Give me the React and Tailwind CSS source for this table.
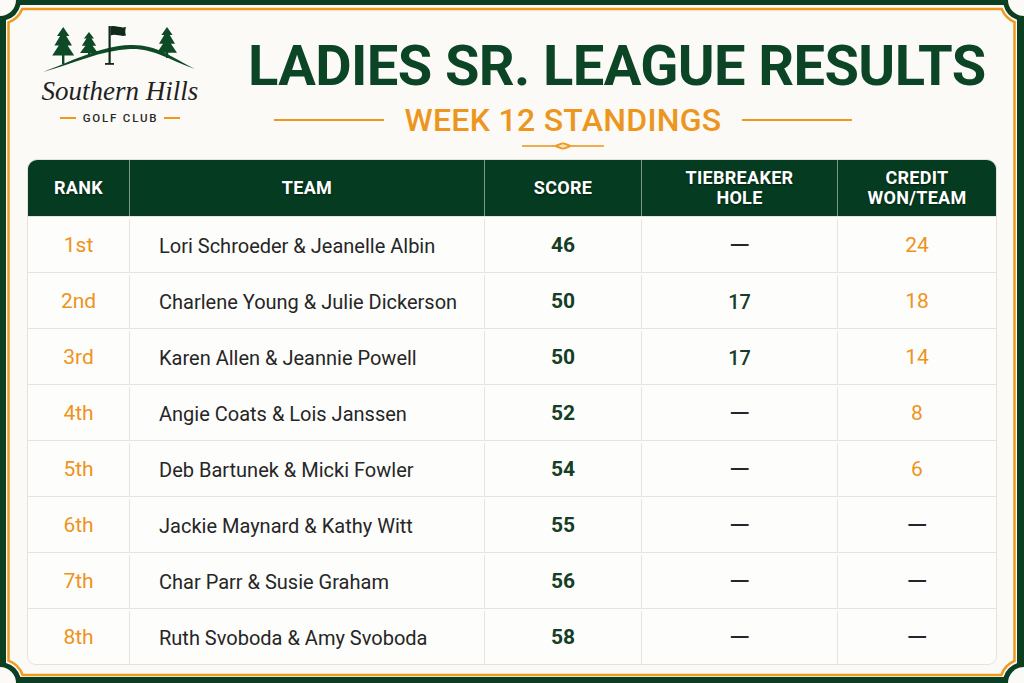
import React from "react";

const rows = [
  ["1st", "Lori Schroeder & Jeanelle Albin", "46", "—", "24"],
  ["2nd", "Charlene Young & Julie Dickerson", "50", "17", "18"],
  ["3rd", "Karen Allen & Jeannie Powell", "50", "17", "14"],
  ["4th", "Angie Coats & Lois Janssen", "52", "—", "8"],
  ["5th", "Deb Bartunek & Micki Fowler", "54", "—", "6"],
  ["6th", "Jackie Maynard & Kathy Witt", "55", "—", "—"],
  ["7th", "Char Parr & Susie Graham", "56", "—", "—"],
  ["8th", "Ruth Svoboda & Amy Svoboda", "58", "—", "—"],
];

function pine(cx, top, w, h) {
  const p = [
    [0, 0],
    [0.28, 0.3],
    [0.14, 0.3],
    [0.4, 0.62],
    [0.2, 0.62],
    [0.5, 0.95],
  ];
  const right = p.map(([x, y]) => `${cx + x * w},${top + y * h}`);
  const left = p
    .slice()
    .reverse()
    .map(([x, y]) => `${cx - x * w},${top + y * h}`);
  return "M" + right.join(" L") + " L" + left.join(" L") + " Z";
}

function Frame() {
  const G = "#0c3f22";
  return (
    <svg
      className="absolute inset-0 pointer-events-none"
      width="1024"
      height="683"
      viewBox="0 0 1024 683"
    >
      <path
        fillRule="evenodd"
        fill={G}
        d="M0 0 H1024 V683 H0 Z M20.4 5 L1003.6 5 A21 21 0 0 0 1017 19.8 L1017 663.2 A21 21 0 0 0 1003.6 677 L20.4 677 A21 21 0 0 0 6 662.9 L6 20.1 A21 21 0 0 0 20.4 5 Z"
      />
      {[
        [0, 0],
        [1024, 0],
        [0, 683],
        [1024, 683],
      ].map(([x, y], i) => (
        <circle key={i} cx={x} cy={y} r="16" fill="#fbfaf6" />
      ))}
      <path
        fill="none"
        stroke="#ee9a22"
        strokeWidth="2.5"
        d="M22.25 9 L1001.75 9 A24 24 0 0 0 1014.5 22.04 L1014.5 660.96 A24 24 0 0 0 1001.37 675 L22.63 675 A24 24 0 0 0 8.5 660.56 L8.5 22.44 A24 24 0 0 0 22.25 9 Z"
      />
    </svg>
  );
}

function LogoArt() {
  const G = "#0f4a26";
  return (
    <svg width="160" height="50" viewBox="0 0 160 50">
      <path
        fill={G}
        d="M3 50 C30 40 60 24 90 23 C115 22 130 34 155 47 C128 37 112 26 90 27 C62 28 32 42 3 50 Z"
      />
      <rect x="22" y="33" width="2.4" height="9" fill={G} />
      <path d={pine(23.2, 5, 22, 30)} fill={G} />
      <rect x="48" y="28" width="2" height="7" fill={G} />
      <path d={pine(49, 10, 18, 22)} fill={G} />
      <rect x="126" y="30" width="2.2" height="6" fill={G} />
      <path d={pine(127, 5, 20, 27)} fill={G} />
      <rect x="68.5" y="4" width="2.2" height="38" fill="#102a1a" />
      <rect x="65" y="41" width="9" height="1.8" fill="#102a1a" />
      <path
        fill="#102a1a"
        d="M70.5 4.5 C76 3 80 6.5 86 5 C85 8 85 11 86 13.5 C80 15 76 11.5 70.5 13.5 Z"
      />
    </svg>
  );
}

function Ornament() {
  return (
    <svg width="82" height="10" viewBox="0 0 82 10">
      <path d="M0 5 H32" stroke="#ee9a22" strokeWidth="1.6" />
      <path d="M50 5 H82" stroke="#ee9a22" strokeWidth="1.6" />
      <path
        d="M30 5 C35 4 37 2 41 1.5 C45 2 47 4 52 5 C47 6 45 8 41 8.5 C37 8 35 6 30 5 Z"
        fill="#ee9a22"
      />
      <path d="M36 5 C38 4.2 39.5 3.4 41 3.2 C42.5 3.4 44 4.2 46 5 C44 5.8 42.5 6.6 41 6.8 C39.5 6.6 38 5.8 36 5 Z" fill="#fbe3b8" />
    </svg>
  );
}

function Dash() {
  return <span className="text-[27px] leading-[20px] font-normal text-[#262626]">—</span>;
}

export default function App() {
  return (
    <div
      className="relative w-[1024px] h-[683px] overflow-hidden bg-[#fbfaf6]"
      style={{ fontFamily: "Roboto, 'Liberation Sans', sans-serif" }}
    >
      <Frame />
      <div className="relative flex flex-col px-[27px]">
        <div className="flex h-[159px]">
          <div className="ml-[13px] w-[160px] pt-[22px] flex flex-col items-center">
            <LogoArt />
            <div
              className="mt-[2px] h-[34px] leading-[34px] text-[27px] italic text-[#1f1f1f] whitespace-nowrap"
              style={{ fontFamily: "'Liberation Serif', 'DejaVu Serif', serif" }}
            >
              Southern Hills
            </div>
            <div className="mt-[3px] flex items-center gap-[6px]">
              <div className="w-[16px] h-[2px] bg-[#ee9a22]" />
              <div className="text-[11.5px] leading-[14px] font-medium tracking-[1.8px] text-[#2a2a2a] pl-[1px] whitespace-nowrap">
                GOLF CLUB
              </div>
              <div className="w-[16px] h-[2px] bg-[#ee9a22]" />
            </div>
          </div>
          <div className="ml-[48px] pt-[38px] flex flex-col">
            <div className="h-[56px] leading-[56px] text-[56px] font-bold text-[#0c4526] tracking-[-0.6px] whitespace-nowrap">
              LADIES SR. LEAGUE RESULTS
            </div>
            <div className="ml-[26px] w-[578px] mt-[10px] h-[32px] flex items-center gap-[20px]">
              <div className="flex-1 h-[2px] bg-[#ee9a22]" />
              <div className="text-[32px] leading-[32px] font-medium text-[#ec9620] tracking-[0.3px] whitespace-nowrap">
                WEEK 12 STANDINGS
              </div>
              <div className="flex-1 h-[2px] bg-[#ee9a22]" />
            </div>
            <div className="ml-[26px] w-[578px] mt-[5px] flex justify-center">
              <Ornament />
            </div>
          </div>
        </div>

        <div className="w-[970px] rounded-t-[10px] rounded-b-[9px] border border-[#e4e2dc] bg-[#fdfdfc] overflow-hidden">
          <div className="grid grid-cols-[102px_355px_157px_196px_158px] h-[56px] bg-[#053b20] text-white font-bold text-[18px] leading-[20px] tracking-[0.3px] [text-shadow:0_1px_2px_rgba(0,0,0,0.45)]">
            <div className="flex items-center justify-center border-r border-[#7f9787]">RANK</div>
            <div className="flex items-center justify-center border-r border-[#7f9787]">TEAM</div>
            <div className="flex items-center justify-center border-r border-[#7f9787]">SCORE</div>
            <div className="flex items-center justify-center text-center border-r border-[#7f9787]">
              TIEBREAKER
              <br />
              HOLE
            </div>
            <div className="flex items-center justify-center text-center">
              CREDIT
              <br />
              WON/TEAM
            </div>
          </div>
          {rows.map((r, i) => (
            <div
              key={i}
              className="grid grid-cols-[102px_355px_157px_196px_158px] h-[56px] border-t border-[#e7e5e0] text-[20px] pt-[2px]"
            >
              <div className="flex items-center justify-center border-r border-[#e7e5e0] text-[#ee9320] text-[21px]">
                {r[0]}
              </div>
              <div className="flex items-center pl-[29px] border-r border-[#e7e5e0] text-[#262626]">
                {r[1]}
              </div>
              <div className="flex items-center justify-center border-r border-[#e7e5e0] font-bold text-[#163d25] text-[21px]">
                {r[2]}
              </div>
              <div className="flex items-center justify-center border-r border-[#e7e5e0] font-medium text-[#163d25]">
                {r[3] === "—" ? <Dash /> : r[3]}
              </div>
              <div className="flex items-center justify-center text-[#ee9320] text-[21px]">
                {r[4] === "—" ? <Dash /> : r[4]}
              </div>
            </div>
          ))}
        </div>
      </div>
    </div>
  );
}
